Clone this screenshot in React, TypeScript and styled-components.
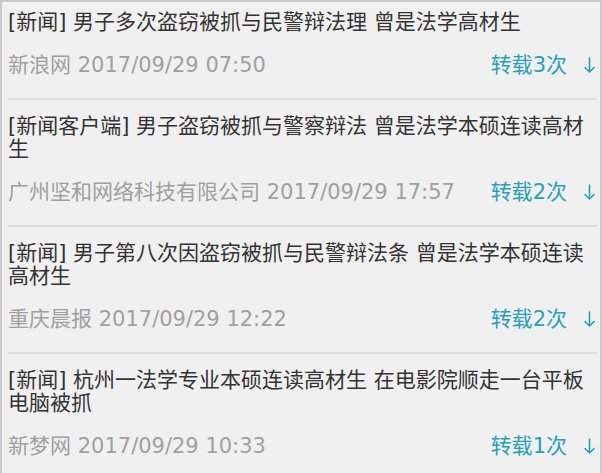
import styled, { createGlobalStyle } from "styled-components";

const GlobalStyle = createGlobalStyle`
  * { box-sizing: border-box; }
  body {
    margin: 0;
    background: #f0f0f0;
    font-family: "DejaVu Sans", "Noto Sans CJK SC", sans-serif;
  }
`;

const Panel = styled.div`
  width: 602px;
  height: 473px;
  background: #f0f0f0;
  border: 2px solid #c9c9c9;
  border-bottom: none;
  overflow: hidden;
`;

const Item = styled.div<{ $first?: boolean; $last?: boolean }>`
  margin: 0 3px 0 6px;
  padding: ${(p) => (p.$first ? "9px 0 21px" : "15px 0 21px")};
  border-bottom: ${(p) => (p.$last ? "none" : "2px solid #dddddd")};
`;

const Title = styled.div`
  font-size: 21px;
  line-height: 23px;
  color: #333333;
  padding-right: 4px;
`;

const Meta = styled.div`
  display: flex;
  align-items: center;
  justify-content: space-between;
  margin-top: 20px;
  font-size: 21px;
  line-height: 23px;
  color: #a0a0a0;
  padding-right: 2px;
`;

const Repost = styled.a`
  display: flex;
  align-items: center;
  gap: 17px;
  color: #2a9fba;
  text-decoration: none;
  cursor: pointer;
`;

const ArrowIcon = () => (
  <svg width="11" height="17" viewBox="0 0 11 17" fill="none">
    <path
      d="M5.5 1v14M1 10.5l4.5 4.5 4.5-4.5"
      stroke="#2a9fba"
      strokeWidth="1.6"
      strokeLinecap="round"
      strokeLinejoin="round"
    />
  </svg>
);

const news = [
  {
    tag: "新闻",
    title: "男子多次盗窃被抓与民警辩法理 曾是法学高材生",
    source: "新浪网",
    time: "2017/09/29 07:50",
    reposts: 3,
  },
  {
    tag: "新闻客户端",
    title: "男子盗窃被抓与警察辩法 曾是法学本硕连读高材生",
    source: "广州坚和网络科技有限公司",
    time: "2017/09/29 17:57",
    reposts: 2,
  },
  {
    tag: "新闻",
    title: "男子第八次因盗窃被抓与民警辩法条 曾是法学本硕连读高材生",
    source: "重庆晨报",
    time: "2017/09/29 12:22",
    reposts: 2,
  },
  {
    tag: "新闻",
    title: "杭州一法学专业本硕连读高材生 在电影院顺走一台平板电脑被抓",
    source: "新梦网",
    time: "2017/09/29 10:33",
    reposts: 1,
  },
];

export default function App() {
  return (
    <>
      <GlobalStyle />
      <Panel>
        {news.map((n, i) => (
          <Item key={i} $first={i === 0} $last={i === news.length - 1}>
            <Title>
              [{n.tag}] {n.title}
            </Title>
            <Meta>
              <span>
                {n.source} {n.time}
              </span>
              <Repost>
                转载{n.reposts}次
                <ArrowIcon />
              </Repost>
            </Meta>
          </Item>
        ))}
      </Panel>
    </>
  );
}
